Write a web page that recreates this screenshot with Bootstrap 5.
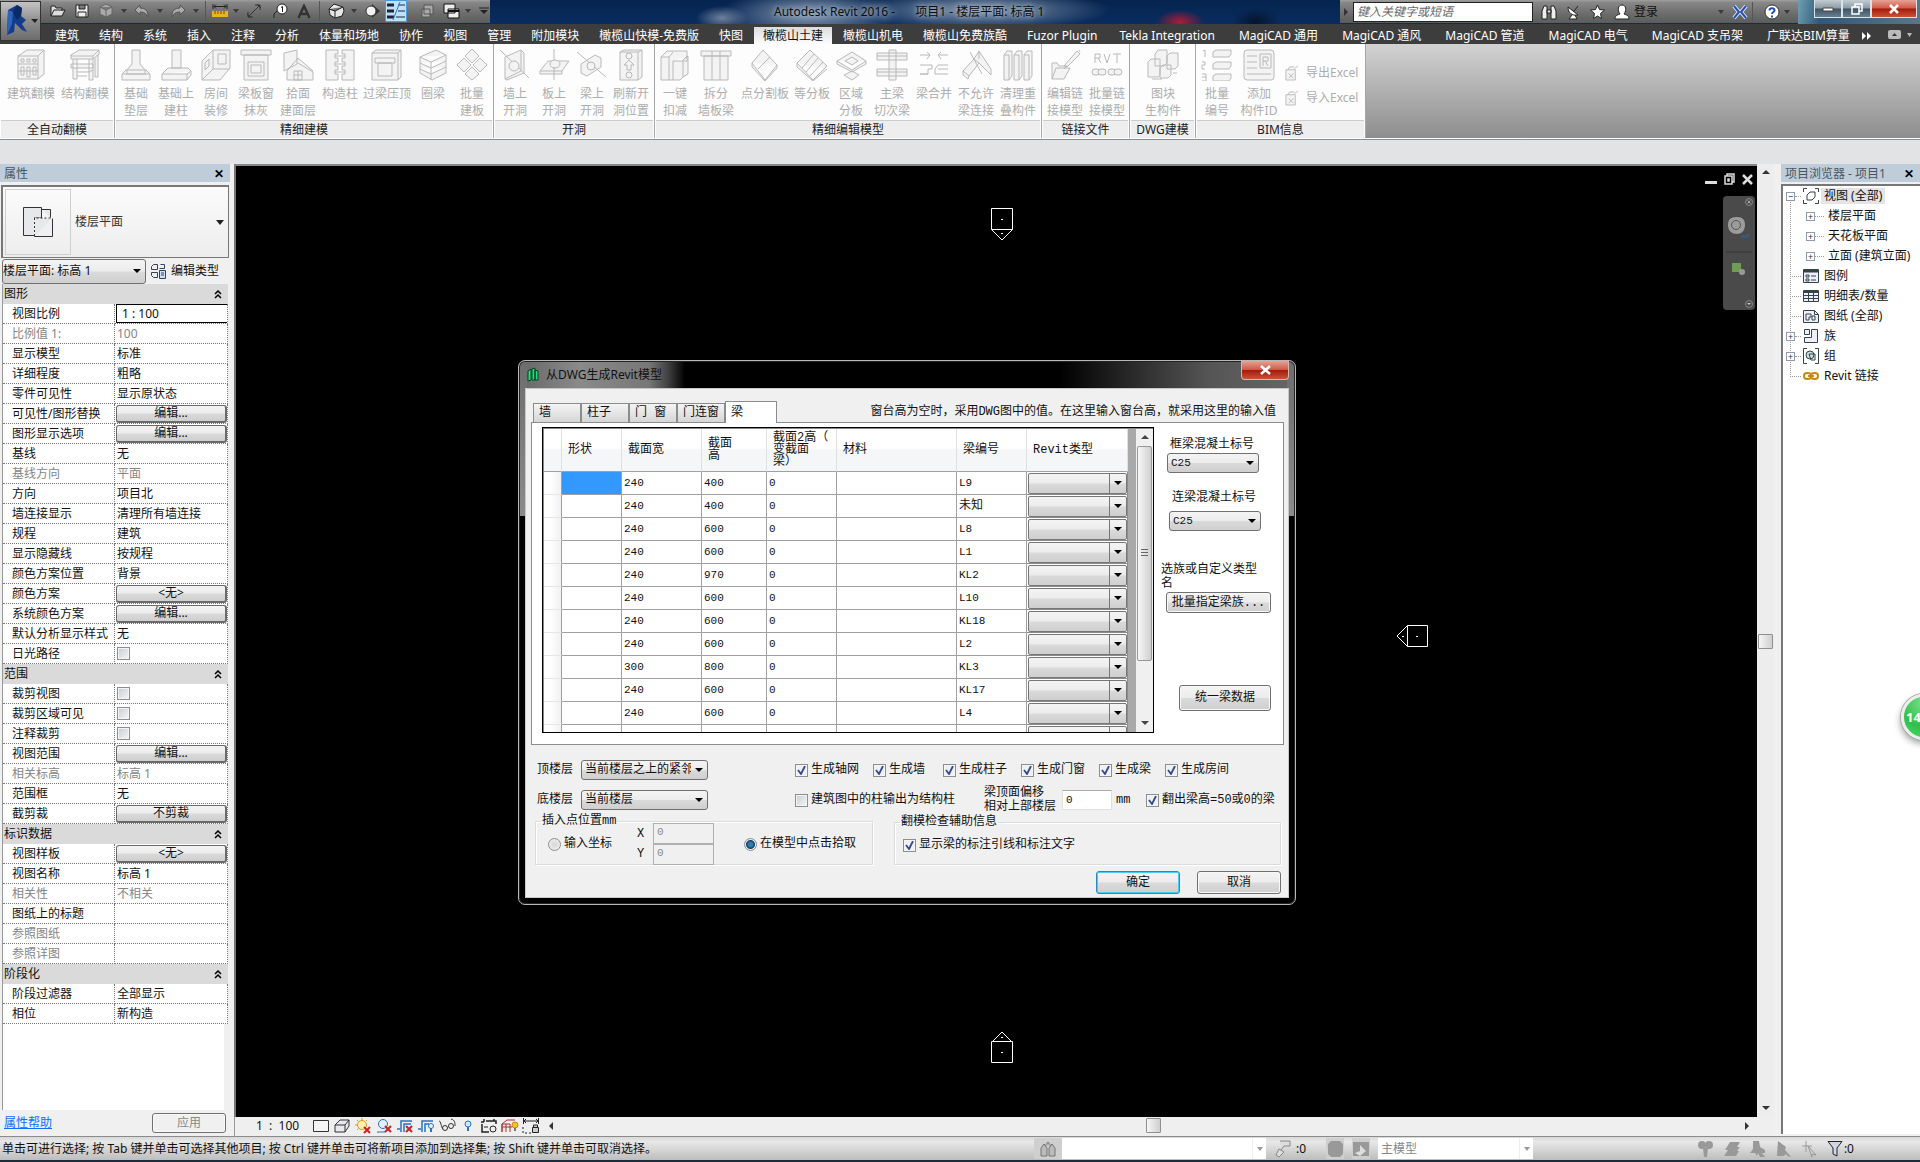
<!DOCTYPE html>
<html lang="zh-CN">
<head>
<meta charset="utf-8">
<meta name="viewport" content="width=device-width, initial-scale=1">
<title>Autodesk Revit 2016 - 项目1 - 楼层平面: 标高 1</title>
<link rel="stylesheet" href="https://cdn.jsdelivr.net/npm/bootstrap@5.3.0/dist/css/bootstrap.min.css">
<style>
:root{--ui:"Noto Sans","Noto Sans CJK SC",sans-serif;--dlg:"Liberation Mono","Noto Sans CJK SC",monospace;
--btn:linear-gradient(#f4f4f4,#ececec 48%,#dadada 52%,#cfcfcf);
--arrow:url("data:image/svg+xml,%3Csvg xmlns='http://www.w3.org/2000/svg' width='16' height='16'%3E%3Cpath d='M4 6h8l-4 4z' fill='%23000'/%3E%3C/svg%3E")}
body{font-family:var(--ui);font-size:12px;line-height:16px;color:#111;background:#f0f0f0}
button,input,select{font:inherit;color:inherit}
button{border:0;background:none;padding:0}
svg{display:block;flex:none}
.app{height:100vh;overflow:hidden}
/* title bar */
.topbar{height:24px;background:radial-gradient(ellipse 26px 12px at 722px 18px,#6f819a,transparent),radial-gradient(ellipse 90px 26px at 810px 14px,#8798b0,transparent),radial-gradient(ellipse 130px 20px at 980px 10px,#8799ae,transparent),radial-gradient(ellipse 24px 12px at 1180px 22px,#b01a36,transparent),radial-gradient(ellipse 24px 14px at 1256px 22px,#04142e,transparent),linear-gradient(#05244f,#0a2c5e)}
.steel{background:linear-gradient(#a0a0a0,#888 10%,#6c6c6c 60%,#5c5c5c);height:23px}
.qat{width:490px;padding-left:45px}
.qat>*{height:22px;display:flex;align-items:center;justify-content:center;flex:none}
.q26{width:26px}.q22{width:22px}.q10{width:10px}
.q10::before,.tri::before{content:"";border:3px solid transparent;border-top:4px solid #3a3a3a;border-bottom:0}
.vsep{width:8px}.vsep::before{content:"";width:1px;height:20px;background:#555}
.qon{background:#bfe0fb;border:1px solid #3d9be9}
.appmenu{position:absolute;left:0;top:1px;width:41px;height:40px;background:linear-gradient(#c4c4c4,#8e8e8e 50%,#6c6c6c);border:1px solid #333;z-index:3}
.caption{flex:1;display:flex;align-items:center;padding-left:284px;gap:20px;color:#0c0c0c;text-shadow:0 0 4px #a9b8cc,0 0 8px #a9b8cc;white-space:pre}
.search{width:180px;height:20px;border:1px solid #222;border-radius:0;padding:0 3px;font-style:italic;background:#fff;flex:none}
.search::placeholder{color:#666}
.infobar{width:458px;flex:none;white-space:nowrap}
.infoicons{gap:9px;padding-left:8px}
.winbtns{width:122px;padding:0 3px 0 16px;background:linear-gradient(100deg,#6fa0b0,#2f587a 20%,#5d7586)}
.winbtns button{height:18px;width:29px;border:1px solid #d8e4ea;border-top:0;display:flex;align-items:center;justify-content:center;background:linear-gradient(#c3ccd2,#8c9aa5 48%,#3f5263 52%,#66808f)}
.winbtns .red{width:47px}
.winbtns .red,.dlgclose{background:linear-gradient(#e6a295,#cf5a47 48%,#a51a0c 52%,#cb5236)!important}
/* tabs */
.ribtabs{height:20px;background:#3d3d3d;padding-left:45px;white-space:nowrap}
.ribtabs .nav-link{padding:3px 10px 0;line-height:17px;color:#fff;border:0;border-radius:0}
.ribtabs .nav-link.wide{padding-left:12px;padding-right:12px}
.ribtabs .nav-link.active{background:linear-gradient(#dcdcdc,#fcfcfc);color:#111;margin:3px 1px 0;padding:0 9px}
/* ribbon */
.ribbon{height:95px;background:linear-gradient(#d2d2d2,#8e8e8e);border-bottom:1px solid #fff;box-shadow:0 1px #8d8d8d;margin-bottom:1px}
.rpanel{background:#fdfdfd;border-right:1px solid #a6a6a6;display:flex;flex-direction:column}
.rtools{flex:1;display:flex;padding:5px 0 0 1px;color:#adadad}
.rpanel:first-child .rtools{padding-left:4px}
.rtools button{display:flex;flex-direction:column;align-items:center;white-space:nowrap;line-height:17px;text-align:center}
.rtools svg{width:32px;height:32px;margin-bottom:4px;fill:#f3f3f3;stroke:#b9b9b9;stroke-width:1}
.rsmall{padding:15px 0 0 4px;gap:8px}
.rtools .sm{flex-direction:row;gap:7px}.rtools .sm svg{width:14px;height:16px;margin:0}
.rtitle{height:18px;background:#eee;border-top:1px solid #ccc;margin:0 1px;text-align:center;line-height:18px;color:#222}
.w36{width:36px}.w38{width:38px}.w40{width:40px}.w44{width:44px}.w54{width:54px}.w64{width:64px}
.optbar{height:24px;background:#e1e3e5}
/* docked panels */
.ptitle{height:18px;background:#bfcddb;color:#4a5560;padding:1px 6px 0 4px;line-height:18px}
.ptitle button{color:#000;font-weight:700;line-height:16px}
.left-dock{width:234px;padding-right:4px;flex:none}
.typebox{height:73px;border:1px solid #777;border-width:2px 1px 1px 2px;background:linear-gradient(#fbfbfb,#ededed);margin:3px 1px 0 1px;color:#333}
.typeimg{width:66px;height:66px;border:1px solid #cfcfcf;margin:0 4px 0 2px}
.instrow{height:26px;padding-left:2px}
.win-select{appearance:none;border:1px solid #707070;border-radius:3px;background:var(--arrow) right 0 center/16px no-repeat,var(--btn);padding:0 16px 0 3px;min-width:0}
.instsel{width:144px;height:25px;padding-left:0}
.props{table-layout:fixed;width:226px;margin-left:2px;border-collapse:separate;border-spacing:0;border-left:1px solid #999}
.props td,.props th{height:20px;padding:0;line-height:18px;white-space:nowrap;overflow:hidden;font-weight:400}
.props .lab{width:112px}
.props .grp th{background:#dadada;padding:0 6px 0 1px}
.props .row-label{padding-left:9px;border-bottom:1px dotted #777;border-right:1px dotted #777;background:#fff}
.props .row-val{padding-left:2px;border-bottom:1px dotted #777;border-right:1px dotted #777;background:#fff}
.props .dim{color:#858585}
.props .hasbtn{padding:0 0 0 1px}
.props .hasbtn button{display:block;width:111px;height:18px;border:1px solid #6a6a6a;border-right-width:2px;border-bottom-width:2px;border-radius:3px;background:var(--btn);line-height:14px}
.props input[type=text]{display:block;width:112px;height:19px;border:1px solid #000;padding:0 5px;background:#fff}
.tick{appearance:none;width:13px;height:13px;border:1px solid #8a8f94;background:linear-gradient(135deg,#c9ccd0,#f6f6f6);box-shadow:inset 0 0 0 1px #f4f4f4;margin:0;flex:none;display:block}
.tick:checked{background:url("data:image/svg+xml,%3Csvg xmlns='http://www.w3.org/2000/svg' viewBox='0 0 11 11'%3E%3Cpath d='M2 5l3 4 4-8' fill='none' stroke='%23324b8c' stroke-width='1.8'/%3E%3C/svg%3E"),#eef0f3}
.propfill{background:#fff;margin:0 6px 0 2px;border-left:1px solid #999}
.propfoot{height:26px}
.applybtn{width:74px;height:20px;color:#888;background:transparent!important}
.win-btn{border:1px solid #707070;border-radius:3px;background:var(--btn);box-shadow:inset 0 0 0 1px #f8f8f8}
/* canvas */
.canvas{background:#000;border-left:2px solid #777;border-top:2px solid #888}
.marker{position:absolute;fill:#000;stroke:#fff}
.navbarv{position:absolute;right:2px;top:30px;width:32px;height:114px;background:#4a4a4a;border-radius:4px}
.mdi{position:absolute;right:4px;top:7px;gap:7px}
.vscroll{width:17px;background:#ededed;flex:none}
.thumb{width:15px;height:15px;background:linear-gradient(90deg,#f6f6f6,#cfcfcf);border:1px solid #8f8f8f;border-radius:1px}
.vthumb{margin-top:453px}.hthumb{margin-left:592px}
.viewbar{height:19px;background:#efefef;border-left:1px solid #999;padding:0 0 2px 21px}
.viewbar svg{width:18px;height:16px;fill:none}
.viewbar .harr{width:6px;height:8px}
.viewscale{width:56px;white-space:pre}
.right-dock{width:146px;padding-left:7px;flex:none}
.tree{background:#fff;border-left:2px solid #777;border-top:2px solid #777;padding:0;margin:2px 0;list-style:none;position:relative}
.tree li{height:20px;display:flex;align-items:center;white-space:nowrap;padding-left:3px}
.tree .exp{width:9px;height:9px;border:1px solid #8e9bb0;background:#fff;position:relative;flex:none;font-size:9px;line-height:7px;color:#234}
.tree .dots{width:6px;border-top:1px dotted #999;flex:none}
.tree .ico{margin:0 5px 0 2px}
.tree .kid{padding-left:23px}.tree .kid .dots{width:9px;margin-right:4px}
.tree .noexp{width:11px;border-top:1px dotted #999;margin-left:4px;flex:none}
.tree .cur{background:#e4e4e4;padding:0 3px;margin-left:-3px}
.tree::before{content:"";position:absolute;left:7px;top:14px;height:177px;border-left:1px dotted #999}
.ball{position:absolute;right:-27px;top:530px;width:46px;height:46px;border-radius:50%;border:3px solid #e9eeea;background:radial-gradient(circle at 50% 15%,#7be08a,#2fbf4a 60%,#4fdc68);box-shadow:0 0 0 1px #aaa,-1px 4px 6px #aaa;color:#fff;font-weight:700;font-size:13px;line-height:40px;text-align:left;padding-left:2px}
.statusbar{height:26px;background:linear-gradient(#d8d8d8,#e8e8e8 20%,#bdbdbd);border-top:1px solid #8b8b8b;border-bottom:2px solid #1d2c3c;white-space:nowrap;padding-left:2px}
.statusbar select{height:21px;border:0;background:#fff;appearance:none;color:#888;padding:0 3px}
.statusright{width:886px}
.wsel{width:190px}.osel{width:141px}
.sbtri{width:14px;background:#fff;height:21px;display:flex;align-items:center;justify-content:center;border-left:1px solid #eee}
.sbtri::before{border-top-color:#999}
.sbi{width:18px;background:#cfcfcf;height:21px;display:flex;align-items:center;justify-content:center}
.sbi.big{width:28px}
.sbend{width:62px}
/* dialog */
.dlg{position:absolute;left:282px;top:194px;width:778px;border:1px solid #b8b8b8;border-radius:7px;background:linear-gradient(#6d6d6d,#8b8b8b 155px,#000 155px) left/8px 100% no-repeat,linear-gradient(#6d6d6d,#8b8b8b 155px,#000 155px) right/8px 100% no-repeat,linear-gradient(90deg,#666,#8a8a8a 60px,#777 130px,#444 148px,#000 166px,#000 540px,#555 690px,#666) top/100% 30px no-repeat,#000;padding:0 6px 6px;box-shadow:inset 0 0 0 1px #222;font-family:var(--dlg)}
.dlghead{height:27px;font-family:var(--ui);color:#111;padding-left:2px}
.dlgtitle{gap:7px}
.dlgclose{width:48px;height:19px;border:1px solid #d6b6b0;border-top:0;border-radius:0 0 4px 4px;align-self:flex-start;display:flex;align-items:center;justify-content:center}
.client{background:#f0f0f0;border:1px solid #c8c8c8;padding:11px 4px 3px 5px}
.dtabs{align-items:flex-end;height:22px;padding-left:2px}
.dtabs .nav-link{width:48px;height:19px;border:1px solid #8c8c8c;border-bottom:0;border-radius:0;background:linear-gradient(#f4f4f4,#d6d6d6);padding:1px 0 0 5px;text-align:left;color:#111;line-height:17px;white-space:nowrap}
.dtabs .nav-link.active{width:52px;height:22px;background:#fff;z-index:1;margin-bottom:-1px;color:#111}
.dnote{padding:4px 8px 0 0}
.tabpage{background:#fff;border:1px solid #8c8c8c;padding:4px 0 11px 10px}
.gridbox{width:612px;height:306px;border:1px solid #000;box-shadow:inset 1px 1px #888;overflow:hidden;background:#a9a9a9;padding:1px 0 0 1px;flex:none}
.beams{table-layout:fixed;width:584px;border-collapse:separate;border-spacing:0;background:#fff;flex:none;align-self:flex-start}
.beams th{height:43px;border-right:1px solid #e0e0e0;border-bottom:1px solid #a0a0a0;background:linear-gradient(#fff,#fff 45%,#f5f6f8 50%,#f5f6f8);padding:0 14px 0 6px;font-weight:400;line-height:12px;vertical-align:middle}
.beams td{height:23px;border-right:1px solid #a0a0a0;border-bottom:1px solid #a0a0a0;padding:0 0 0 2px;line-height:16px;font-size:11px}
.beams td:first-child{background:linear-gradient(90deg,#fff 35%,#f0f1f4);border-bottom-color:#e6e6e6}
.beams td.sel{background:#3399ff}
.beams td.cb{padding:0;border-color:#8c8c8c}
.beams td.cjk{font-size:12px}
.beams select{appearance:none;display:block;width:99px;height:21px;margin-left:1px;border:1px solid #777;border-radius:2px;background:var(--arrow) right 0 center/16px no-repeat,linear-gradient(#777,#777) right 16px center/1px 100% no-repeat,var(--btn)}
.gscroll{width:17px;background:#f0f0f0;padding:0 1px}
.grip{height:215px;background:linear-gradient(90deg,#f7f7f7,#cfcfcf);border:1px solid #979797;border-radius:2px}
.side{flex:1;padding:10px 12px 0 12px;position:relative}
.c25{width:92px;height:20px;align-self:flex-start;margin-left:1px;font-size:11px}
.c25.second{margin:5px 0 0 3px}
.lab2{padding-left:6px;margin-top:17px}
.famtext{line-height:14px;margin:32px 0 1px -5px}
.fambtn{height:21px}
.unibtn{width:92px;height:26px;margin-top:72px}
.foot{padding:15px 3px 0 6px}
.frow{height:20px}.frow2{height:40px}.frow3{height:45px;margin-left:-2px}
.flab{width:44px}.fsel{width:127px;height:20px;margin-right:87px}
.chk{display:flex;align-items:center;gap:3px;white-space:nowrap}
.chk4{width:78px}.chk3{width:66px}.chkpillar{width:189px}.chkxy{width:93px}.chkpick{margin-left:30px}
.offlab{width:78px;line-height:14px}
.mmlab{width:30px}
.num{width:50px;height:20px;border:1px solid #e0e0e0;border-top-color:#aaa;padding:0 3px;background:#fff;font-size:11px;line-height:18px}
.gbx{border:1px solid #dcdcdc;box-shadow:inset 1px 1px #fff,1px 1px #fff;margin:0;padding:0 8px}
.gbx.g1{width:338px;height:51px}.gbx.g2{width:387px;height:50px}
.gbx legend{float:none;width:auto;font-size:12px;line-height:14px;margin:0 0 0 -3px;padding:0 1px}
.gbody{height:36px;margin-top:-2px}
.xylab{width:16px;line-height:20px}
.xy{width:61px;height:21px;border:1px solid #b0b0b0;background:#f0f0f0;color:#8a8a8a;padding:0 3px 3px;font-size:11px;display:block}
.rad{appearance:none;width:13px;height:13px;border:1px solid #8a8f94;border-radius:50%;background:radial-gradient(#d6d6d6,#f4f4f4);margin:0;flex:none}
.rad:checked{background:radial-gradient(#2b7fb0 0 2px,#173f66 4px,#eee 5px)}
.okrow{gap:17px;margin-top:6px}
.okbtn{width:84px;height:23px}
.okbtn.main{border-color:#2c88b8;box-shadow:inset 0 0 0 1px #46cdf5}
</style>
</head>
<body>
<div class="app d-flex flex-column">
<header class="position-relative">
 <button class="appmenu" aria-label="应用程序菜单"><svg width="39" height="38" viewBox="0 0 39 38"><path d="M7 8l9-5 5 3-1 8 5 4-4 4 5 8-5-2-7-7-1 9-7 3z" fill="#153c8c"/><path d="M7 8l5 2-1 12-5 11z" fill="#2f64b8"/><path d="M12 10l4-7 5 3-1 8-4 4z" fill="#0d2a68"/><path d="M30 17h7l-3 4z" fill="#222"/></svg></button>
 <div class="topbar d-flex">
  <div class="steel qat d-flex">
   <button class="q26" aria-label="打开"><svg width="16" height="14" viewBox="0 0 16 14" fill="#ddd" stroke="#222"><path d="M1 12V2h4l1 2h6v3M1 12l3-6h11l-3 6z"/></svg></button>
   <button class="q22" aria-label="保存"><svg width="14" height="14" viewBox="0 0 14 14" fill="#eee" stroke="#222"><path d="M1 1h12v12H1zM4 1v4h6V1M3 13V8h8v5"/></svg></button>
   <button class="q26" aria-label="同步"><svg width="16" height="16" viewBox="0 0 16 16" fill="#aaa" stroke="#666"><path d="M8 1l6 3v7l-6 3-6-3V4zM2 4l6 3 6-3M8 7v7"/></svg></button>
   <button class="q10" aria-label="更多"></button>
   <button class="q26" aria-label="放弃"><svg width="16" height="14" viewBox="0 0 16 14" fill="#aaa" stroke="#555"><path d="M1 6l5-5v3c6 0 8 3 8 9-2-4-4-5-8-5v3z"/></svg></button>
   <button class="q10" aria-label="更多"></button>
   <button class="q26" aria-label="重做"><svg width="16" height="14" viewBox="0 0 16 14" fill="#aaa" stroke="#555"><path d="M15 6l-5-5v3C4 4 2 7 2 13c2-4 4-5 8-5v3z"/></svg></button>
   <button class="q10" aria-label="更多"></button><span class="vsep"></span>
   <button class="q22" aria-label="测量"><svg width="16" height="16" viewBox="0 0 16 16"><path d="M1 1v5M15 1v5M2 3.500h12M4 1.500l-2 2 2 2M12 1.500l2 2-2 2" stroke="#222" fill="none"/><path d="M0 8h16v6H0z" fill="#e8b422"/><path d="M3 8v3M6 8v3M9 8v3M12 8v3" stroke="#6b4b00"/></svg></button>
   <button class="q10" aria-label="更多"></button>
   <button class="q26" aria-label="对齐标注"><svg width="16" height="16" viewBox="0 0 16 16" stroke="#333" fill="none"><path d="M2 14L14 2M9 2h5v5M2 9v5h5M1 11l4 4M11 1l4 4"/></svg></button>
   <button class="q26" aria-label="标记"><svg width="16" height="16" viewBox="0 0 16 16"><circle cx="10" cy="6" r="5" fill="#fff" stroke="#222"/><path d="M9 4.500l1.500-1V9M5 8l-3 3v4" stroke="#222" fill="none"/></svg></button>
   <button class="q22" aria-label="文字"><svg width="14" height="15" viewBox="0 0 14 15" fill="none" stroke="#333" stroke-width="2.500"><path d="M1.500 14L7 2l5.500 12M3.500 10h7"/></svg></button><span class="vsep"></span>
   <button class="q26" aria-label="三维视图"><svg width="17" height="16" viewBox="0 0 17 16" fill="#e6e6e6" stroke="#222"><path d="M1 6l5-5 9 3 1 4-2 5-7 2-5-3zM1 6l6 2 8-4M7 8v7"/></svg></button>
   <button class="q10" aria-label="更多"></button>
   <button class="q26" aria-label="剖面"><svg width="15" height="14" viewBox="0 0 15 14"><path d="M7 0l8 7-8 7z" fill="#333"/><circle cx="6" cy="7" r="5" fill="#f2f2f2" stroke="#333"/></svg></button>
   <button class="q22 qon" aria-label="细线"><svg width="18" height="18" viewBox="0 0 18 18"><path d="M0 3h7M0 9h7M0 15h7" stroke="#223" stroke-width="3"/><path d="M11 3h7M11 9h7M9 15h9" stroke="#223"/><path d="M13 0L6 18" stroke="#2a7bd0"/></svg></button>
   <button class="q26 ms-2" aria-label="关闭隐藏窗口"><svg width="14" height="15" viewBox="0 0 14 15" fill="#aaa" stroke="#555"><path d="M3 1h9v9H3zM1 5h8v8H1z"/></svg></button>
   <button class="q22" aria-label="切换窗口"><svg width="18" height="17" viewBox="0 0 18 17" fill="#eee" stroke="#111"><path d="M1 1h11v9H1zM5 6h11v9H5z"/><path d="M5 8h11" stroke-width="2"/></svg></button>
   <button class="q10" aria-label="更多"></button>
   <button class="q22" aria-label="自定义"><svg width="10" height="8"><path d="M0 1h10" stroke="#222"/><path d="M1 3h8l-4 4z" fill="#222"/></svg></button>
  </div>
  <div class="caption"><span>Autodesk Revit 2016 -</span><span>项目1 - 楼层平面: 标高 1</span></div>
  <div class="steel infobar d-flex align-items-center">
   <svg width="5" height="8" class="ms-1 me-1"><path d="M0 0l4 4-4 4z" fill="#333"/></svg>
   <input class="search" type="search" placeholder="键入关键字或短语" aria-label="搜索">
   <div class="d-flex align-items-center infoicons">
   <button aria-label="搜索"><svg width="16" height="16" viewBox="0 0 16 16" fill="#eee" stroke="#222"><path d="M1 15V7l2-5h3v13zM15 15V7l-2-5h-3v13zM6 6h4v3H6z"/></svg></button>
   <button aria-label="通讯中心"><svg width="15" height="16" viewBox="0 0 15 16" fill="#fff" stroke="#222"><path d="M2 3c0 6 4 9 10 8zM6 11l-3 4h8l-2-4M8 7l4-5"/></svg></button>
   <button aria-label="收藏夹"><svg width="15" height="15" viewBox="0 0 15 15" fill="#fff" stroke="#222"><path d="M7.500 1l2 4.500 5 .5-4 3.500 1 5-4-2.500-4 2.500 1-5-4-3.500 5-.5z"/></svg></button>
   <button class="d-flex gap-1 align-items-center"><svg width="16" height="16" viewBox="0 0 16 16" fill="#fff" stroke="#222"><path d="M1 15c0-4 3-4 5-5-3-4-2-9 2-9s5 5 2 9c2 1 5 1 5 5z"/></svg>登录</button>
   </div>
   <div class="d-flex align-items-center gap-1 ms-auto pe-1">
   <span class="q10 d-flex"></span>
   <button aria-label="Exchange Apps"><svg width="16" height="16" viewBox="0 0 16 16" fill="none"><g stroke="#dde6f5" stroke-width="4"><path d="M2 2l5 6-5 6M14 2L9 8l5 6"/></g><g stroke="#2550b0" stroke-width="2"><path d="M2 2l5 6-5 6M14 2L9 8l5 6"/></g></svg></button>
   <span class="vsep d-flex"></span>
   <button aria-label="帮助"><svg width="16" height="16" viewBox="0 0 16 16"><circle cx="8" cy="8" r="7" fill="#fff" stroke="#333"/><path d="M5.500 6.500c0-3 5-3 5 0 0 1.500-2.500 1.500-2.500 3.500M8 11.500v2" stroke="#2550b0" stroke-width="2" fill="none"/></svg></button>
   <span class="q10 d-flex"></span>
   </div>
  </div>
  <div class="winbtns d-flex">
   <button aria-label="最小化"><svg width="12" height="6"><path d="M1 2h10v3H1z" fill="#fff" stroke="#444"/></svg></button>
   <button aria-label="还原"><svg width="12" height="12" fill="none" stroke="#fff" stroke-width="1.500"><path d="M4 4V1h7v7H8M1 4h7v7H1z"/></svg></button>
   <button class="red" aria-label="关闭"><svg width="12" height="10" stroke="#fff" stroke-width="2.500"><path d="M2 1l8 8M10 1L2 9"/></svg></button>
  </div>
 </div>
 <nav class="ribtabs nav nav-tabs flex-nowrap border-0 align-items-start" id="tabs"></nav>
 <div class="ribbon d-flex" id="ribbon"></div>
 <div class="optbar"></div>
</header>

<main class="d-flex flex-fill" style="min-height:0">
 <aside class="left-dock d-flex flex-column">
  <div class="ptitle d-flex justify-content-between"><span>属性</span><button aria-label="关闭属性">✕</button></div>
  <div class="typebox d-flex align-items-center">
   <div class="typeimg d-flex align-items-center justify-content-center"><svg width="32" height="32" viewBox="0 0 32 32" fill="#e6e8ea" stroke="#333"><path d="M20 3.500h8.500v9"/><path d="M1.500 1.500h18v10h-7v18h-11z"/><path d="M12.500 12.500h18v18h-18z" fill="#f0f0f4"/><path d="M12.500 30v-18h18" stroke="#fff"/><path d="M12.500 30v-18h18M19.500 3v9" stroke-dasharray="2 2"/></svg></div>
   <span>楼层平面</span><svg class="ms-auto me-1" width="8" height="5"><path d="M0 0h8l-4 5z" fill="#222"/></svg>
  </div>
  <div class="instrow d-flex align-items-center">
   <select class="win-select instsel" id="inst" aria-label="实例"><option>楼层平面: 标高 1</option></select>
   <button class="d-flex align-items-center gap-1 ms-1"><svg width="17" height="17" viewBox="0 0 17 17" fill="none" stroke="#345"><path d="M3.500 1.500h4v5h-6v-3zM10.500 1.500h4v4h-5M1.500 9.500h6v5h-4l-2-2z"/><path d="M9.500 7.500h6v8h-6z" fill="#cfe2f7"/><path d="M11 10h3M11 12h3"/></svg>编辑类型</button>
  </div>
  <table class="props"><colgroup><col class="lab"><col></colgroup><tbody id="props"></tbody></table>
  <div class="propfill flex-fill"></div>
  <div class="propfoot d-flex align-items-center justify-content-between ps-1 pe-1"><a href="#help">属性帮助</a><button class="win-btn applybtn" disabled>应用</button></div>
 </aside>

 <section class="d-flex flex-column flex-fill" style="min-width:0">
  <div class="d-flex flex-fill">
   <div class="canvas flex-fill position-relative overflow-hidden">
    <svg class="marker" style="left:754px;top:42px" width="24" height="33"><path d="M1.500 21.500l10.500 10.500L22.500 21.500M1.500.5h21v21h-21zM11 11.500h2M11 25.500h2"/></svg>
    <svg class="marker" style="left:1160px;top:458px" width="34" height="24"><path d="M11.500 1.500L1 12l10.500 10.500M11.500 1.500h20v21h-20zM20 12.500h2M6 12.500h2"/></svg>
    <svg class="marker" style="left:754px;top:865px" width="24" height="33"><path d="M1.500 11.500L12 1l10.500 10.500M1.500 10.500h21v21h-21zM11 21.500h2M11 6.500h2"/></svg>
    <div class="mdi d-flex"><svg width="12" height="12"><path d="M0 8h12v3H0z" fill="#ddd"/></svg><svg width="11" height="12" fill="none" stroke="#ddd" stroke-width="1.500"><path d="M3 3V1h7v8H8M1 3h7v8H1zM4 6h1v2H4z"/></svg><svg width="11" height="12" stroke="#ddd" stroke-width="2.500"><path d="M1 2l9 9M10 2l-9 9"/></svg></div>
    <div class="navbarv"><svg width="32" height="114" viewBox="0 0 32 114" fill="none"><circle cx="26" cy="6" r="3.500" stroke="#888"/><path d="M24.500 4.500l3 3M27.500 4.500l-3 3" stroke="#aaa"/><path d="M14 21c6 0 8 3 8 8s-3 9-8 9-9-3-9-9 3-8 9-8z" fill="#9b9b9b"/><circle cx="13" cy="29" r="4.500" stroke="#555"/><path d="M18 40c4 2 7 1 8-2" stroke="#39587c" stroke-width="3"/><path d="M3 56h26" stroke="#333"/><path d="M9 67h9v9H9z" fill="#6f9d55"/><circle cx="19" cy="76" r="3" fill="#999"/><circle cx="26" cy="108" r="3.500" stroke="#888"/><path d="M24 107h4l-2 2z" fill="#ccc"/></svg></div>

    <div class="dlg" role="dialog" aria-labelledby="dt">
     <div class="dlghead d-flex align-items-center justify-content-between"><span class="d-flex dlgtitle align-items-center"><svg width="12" height="15" viewBox="0 0 12 15" fill="#2fd67a" stroke="#042"><path d="M1 4l3-2v11l-3 1zM5 2l3-1v12H5zM8 3l3 1v9H8z"/></svg><span id="dt">从DWG生成Revit模型</span></span><button class="dlgclose" aria-label="关闭"><svg width="11" height="10" stroke="#fff" stroke-width="2.500"><path d="M1 1l9 8M10 1L1 9"/></svg></button></div>
     <div class="client">
      <div class="d-flex justify-content-between">
       <div class="dtabs nav flex-nowrap"><button class="nav-link">墙</button><button class="nav-link">柱子</button><button class="nav-link">门 窗</button><button class="nav-link">门连窗</button><button class="nav-link active">梁</button></div>
       <span class="text-nowrap dnote">窗台高为空时，采用DWG图中的值。在这里输入窗台高，就采用这里的输入值</span>
      </div>
      <div class="tabpage d-flex">
       <div class="gridbox d-flex">
        <table class="beams"><colgroup><col style="width:18px"><col style="width:60px"><col style="width:80px"><col style="width:65px"><col style="width:70px"><col style="width:120px"><col style="width:70px"><col style="width:101px"></colgroup>
        <thead><tr><th></th><th>形状</th><th>截面宽</th><th>截面<br>高</th><th class="pe-0 text-nowrap">截面2高（<br>变截面<br>梁）</th><th>材料</th><th>梁编号</th><th class="text-nowrap">Revit类型</th></tr></thead><tbody id="beams"></tbody></table>
        <div class="gscroll ms-auto d-flex flex-column align-items-stretch"><svg width="15" height="17"><path d="M4 10l4-4 4 4z" fill="#444"/></svg><div class="grip d-flex align-items-center justify-content-center"><svg width="8" height="9" stroke="#666"><path d="M0 .5h7M0 3.500h7M0 6.500h7"/></svg></div><svg class="mt-auto" width="15" height="17"><path d="M4 6l4 4 4-4z" fill="#444"/></svg></div>
       </div>
       <div class="side d-flex flex-column">
        <label for="c1" class="ps-1">框梁混凝土标号</label>
        <select class="win-select c25" id="c1"><option>C25</option></select>
        <label for="c2" class="lab2">连梁混凝土标号</label>
        <select class="win-select c25 second" id="c2"><option>C25</option></select>
        <div class="famtext">选族或自定义类型<br>名</div>
        <button class="win-btn text-nowrap fambtn">批量指定梁族...</button>
        <button class="win-btn align-self-end unibtn">统一梁数据</button>
       </div>
      </div>
      <div class="foot">
       <div class="d-flex align-items-center frow">
        <label for="topf" class="flab">顶楼层</label><select class="win-select fsel" id="topf"><option>当前楼层之上的紧邻楼层</option></select>
        <label class="chk chk4"><input class="tick" type="checkbox" checked>生成轴网</label><label class="chk chk3 me-1"><input class="tick" type="checkbox" checked>生成墙</label><label class="chk chk4"><input class="tick" type="checkbox" checked>生成柱子</label><label class="chk chk4"><input class="tick" type="checkbox" checked>生成门窗</label><label class="chk chk3"><input class="tick" type="checkbox" checked>生成梁</label><label class="chk chk4"><input class="tick" type="checkbox" checked>生成房间</label>
       </div>
       <div class="d-flex align-items-center frow2">
        <label for="botf" class="flab">底楼层</label><select class="win-select fsel" id="botf"><option>当前楼层</option></select>
        <label class="chk chkpillar"><input class="tick" type="checkbox">建筑图中的柱输出为结构柱</label>
        <label for="off" class="text-nowrap offlab">梁顶面偏移<br>相对上部楼层</label><input class="num" id="off" type="text" value="0"><span class="ms-1 mmlab">mm</span>
        <label class="chk"><input class="tick" type="checkbox" checked>翻出梁高=50或0的梁</label>
       </div>
       <div class="d-flex justify-content-between align-items-end frow3">
        <fieldset class="gbx g1"><legend>插入点位置mm</legend>
         <div class="gbody d-flex align-items-center"><label class="chk ps-1 chkxy"><input class="rad" type="radio" name="ins">输入坐标</label>
         <div class="d-flex flex-column xylab"><label for="x">X</label><label for="y">Y</label></div>
         <div><input class="xy" id="x" value="0" disabled><input class="xy" id="y" value="0" disabled></div>
         <label class="chk chkpick"><input class="rad" type="radio" name="ins" checked>在模型中点击拾取</label></div></fieldset>
        <fieldset class="gbx g2"><legend>翻模检查辅助信息</legend><div class="gbody d-flex align-items-center"><label class="chk"><input class="tick" type="checkbox" checked>显示梁的标注引线和标注文字</label></div></fieldset>
       </div>
       <div class="d-flex justify-content-end okrow"><button class="win-btn okbtn main">确定</button><button class="win-btn okbtn">取消</button></div>
      </div>
     </div>
    </div>
   </div>
   <div class="vscroll d-flex flex-column align-items-center"><svg width="16" height="17"><path d="M4 10l4-4 4 4z" fill="#333"/></svg><div class="thumb vthumb"></div><svg class="mt-auto" width="16" height="17"><path d="M4 6l4 4 4-4z" fill="#333"/></svg></div>
  </div>
  <div class="viewbar d-flex align-items-center">
   <span class="viewscale">1  :  100</span>
   <span class="d-flex" style="gap:3px">
    <svg viewBox="0 0 18 16" stroke="#333"><path d="M1.500 2.500h15v11h-15z" fill="#f4f4f4"/></svg>
    <svg viewBox="0 0 18 16" stroke="#333"><path d="M2 7l5-5h9v6l-4 6H2zM2 7h10v7M12 7l4-5" fill="#e8e8ee"/></svg>
    <svg viewBox="0 0 18 16"><circle cx="8" cy="7" r="4.500" fill="#fff2b0" stroke="#d79a12"/><path d="M8 0v2M1 7h2M3 2l1.500 1.500M3 12l1.500-1.500M13 2l-1 1" stroke="#d79a12"/><path d="M10 9l6 6M16 9l-6 6" stroke="#c22" stroke-width="2"/></svg>
    <svg viewBox="0 0 18 16"><circle cx="8" cy="6" r="4.500" stroke="#2a72b8" fill="#e3f0fb"/><path d="M2 14h8" stroke="#2a72b8"/><path d="M10 8l6 6M16 8l-6 6" stroke="#c22" stroke-width="2"/></svg>
    <svg viewBox="0 0 18 16"><path d="M1 11h3M5 14V3h11M8 14V6h7" stroke="#2a72b8" stroke-width="1.500"/><path d="M10 8l6 6M16 8l-6 6" stroke="#c22" stroke-width="2"/></svg>
    <svg viewBox="0 0 18 16"><path d="M1 11h3M5 14V3h11M8 14V6h4" stroke="#2a72b8" stroke-width="1.500"/><circle cx="14" cy="8" r="2.500" stroke="#2a72b8"/><path d="M14 10v4" stroke="#2a72b8" stroke-width="2"/></svg>
    <svg viewBox="0 0 18 16" stroke="#333"><path d="M1 3c2 0 2 6 4 8M13 1c4 1 4 4 4 7"/><circle cx="7" cy="10" r="2.500"/><circle cx="13" cy="8" r="2.500"/></svg>
    <svg viewBox="0 0 18 16" stroke="#2a72b8"><circle cx="9" cy="6" r="3" fill="#cfe6fa"/><path d="M9 9v4" stroke-width="2"/></svg>
    <svg viewBox="0 0 18 16" stroke="#222"><path d="M4 1v3M1 4h3M6 3h10v3M2 6v8h7M14 1v2" stroke-width="1.500"/><circle cx="13" cy="11" r="3"/><path d="M4 9h4"/></svg>
    <svg viewBox="0 0 18 16"><path d="M1 14V6l5-4h8M1 9h10M1 14V6h8v8M5 6v8" stroke="#a33"/><circle cx="14" cy="7" r="3" fill="#fbc22d" stroke="#c80"/><path d="M14 10v3" stroke="#777" stroke-width="2"/></svg>
    <svg viewBox="0 0 18 16" stroke="#222"><path d="M1.500 0v6M16.500 0v6M2 3h14M4 1L2 3l2 2M14 1l2 2-2 2"/><path d="M10.500 9.500h6v5h-6zM11.500 9V7h4v2" fill="#ccc"/><path d="M1 9v6h8" stroke-dasharray="2"/></svg>
   </span>
   <svg class="harr ms-2"><path d="M5 0v8L1 4z" fill="#333"/></svg>
   <div class="thumb hthumb"></div>
   <svg class="harr ms-auto me-4"><path d="M1 0v8l4-4z" fill="#333"/></svg>
  </div>
 </section>

 <aside class="right-dock d-flex flex-column position-relative">
  <div class="ptitle d-flex justify-content-between"><span>项目浏览器 - 项目1</span><button aria-label="关闭浏览器">✕</button></div>
  <ul class="tree flex-fill" id="tree"></ul>
  <button class="ball">14</button>
 </aside>
</main>

<footer class="statusbar d-flex align-items-center">
 <span class="flex-fill">单击可进行选择; 按 Tab 键并单击可选择其他项目; 按 Ctrl 键并单击可将新项目添加到选择集; 按 Shift 键并单击可取消选择。</span>
 <span class="d-flex align-items-center statusright">
  <span class="sbi big"><svg width="16" height="16" viewBox="0 0 16 16" fill="#bbb" stroke="#777"><path d="M1 15V7l3-4 3 4v8zM9 15V7l3-4 3 4v8zM5 5l3-4 3 4"/></svg></span>
  <select class="wsel" aria-label="工作集"><option></option></select><span class="sbtri tri me-2"></span>
  <svg width="18" height="18" viewBox="0 0 16 18" fill="#ddd" stroke="#888"><path d="M5 1h10v5H9l-3 4M4 9l5 3-5 5-3-2z"/></svg><span class="ms-1 me-3">:0</span>
  <span class="sbi ms-1 me-2"><svg width="15" height="16"><path d="M0 3l3-3h9l3 3v10l-3 3H3l-3-3z" fill="#999"/></svg></span><span class="sbi me-2"><svg width="16" height="16"><path d="M0 1h16v14H0z" fill="#999"/><path d="M2 8h5M2 12l5-2V4l6 6-6 5" fill="#ddd"/></svg></span>
  <select class="osel" aria-label="设计选项"><option>主模型</option></select><span class="sbtri tri"></span>
  <span class="d-flex ms-auto pe-1 align-items-center" style="gap:9px">
   <svg width="17" height="18" fill="#999"><circle cx="5" cy="5" r="4"/><circle cx="12" cy="5" r="4"/><path d="M6 8h5l-1 9H7z"/></svg>
   <svg width="17" height="18" fill="#999"><path d="M7 2h10l-3 5h3l-3 4h2l-3 5H1l4-6H2z"/></svg>
   <svg width="17" height="18" fill="#999"><path d="M4 1h6l1 6 5 3v3h-3l3 4h-5l-2-4-1 3-2-3H1l3-4z"/></svg>
   <svg width="17" height="18" fill="#999"><path d="M3 1l8 6-1 3 6 7-4-1v-2l-4 2H2z"/></svg>
   <svg width="17" height="18" fill="none" stroke="#999"><path d="M5 1v11M1 6h10M7 6l8 9-4-1v3z"/></svg>
   <span class="d-flex align-items-end"><svg width="17" height="17" fill="#cfd6df" stroke="#223"><path d="M1 1.500h14L10 8v8l-4-2V8z"/></svg>:0</span>
  </span>
  <span class="sbend"></span>
 </span>
</footer>
</div>
<script src="https://cdn.jsdelivr.net/npm/bootstrap@5.3.0/dist/js/bootstrap.bundle.min.js"></script>
<script>
const el=id=>document.getElementById(id);
const tabs=['建筑','结构','系统','插入','注释','分析','体量和场地','协作','视图','管理','附加模块','橄榄山快模-免费版','快图','橄榄山土建','橄榄山机电','橄榄山免费族酷','Fuzor Plugin','Tekla Integration','MagiCAD 通用','MagiCAD 通风','MagiCAD 管道','MagiCAD 电气','MagiCAD 支吊架','广联达BIM算量'];
el('tabs').innerHTML=tabs.map(t=>`<a href="#" class="nav-link${t==='橄榄山土建'?' active':/CAD|Tekla|BIM/.test(t)?' wide':''}">${t}</a>`).join('')+
 '<svg class="mt-2" width="10" height="8" fill="#fff"><path d="M0 0l4 4-4 4zM5 0l4 4-4 4z"/></svg><svg class="ms-3 mt-1" width="26" height="12"><rect y="2" width="13" height="9" rx="2" fill="#bbb"/><path d="M4 8h5L6.500 5z" fill="#333"/><path d="M19 5h5l-2.500 4z" fill="#bbb"/></svg>';

// line drawings on a 32 x 32 grid
const ic={
bld:'<path d="M3 7l9-6h17v24l-6 5H3zM3 7h20v23M23 7l6-6M3 15h20M3 22h20M6 10h3v3H6zM12 10h3v3h-3zM18 10h3v3h-3zM6 18h3v8H6zM12 18h3v10h-3zM18 18h3v8h-3z"/>',
str:'<path d="M2 6l8-5h20l-6 6H2zM2 6v4h22V7M24 10l6-5V1M4 10v20h4V10M20 10v21h4V10M26 9v19h3V6M2 15h22v4H2zM8 23h12l4-2M8 27h10"/>',
fnd:'<path d="M12 1h8v14l5 6v4H7v-4l5-6zM2 25l4-4h20l4 4v6H2zM2 25h28"/>',
col:'<path d="M12 1h9v18h-9zM2 25l6-6h20l3 3v4l-4 5H2zM2 25h25l4-3M27 25v6"/>',
room:'<path d="M2 31V12L13 1h17v18L20 31zM13 1v19L2 31M13 20h17M18 5h8v10h-8zM5 14l4-4v7l-4 4z"/>',
win:'<path d="M1 1h30v5H1zM4 6h24v25H4zM8 13h16v14H8zM11 16h10v8H11z"/>',
house:'<path d="M2 4l13-3v14L2 22zM16 14L31 23v8H5v-9l11-13 15 13M12 22h8v9h-8zM16 22v9M12 26h8"/>',
post:'<path d="M2 1h12v4h-3v4h3v4h-3v4h3v4h-3v4h3v6H2zM18 1h12v30H18v-6h3v-4h-3v-4h3v-4h-3V9h3V5h-3zM11 7h10M11 15h10M11 23h10"/>',
lint:'<path d="M1 4l4-3h25v27l-3 3H1zM1 4h26v27M27 4l3-3M4 9h20v5H4zM7 14h14v13H7z"/>',
ring:'<path d="M3 8l16-7 10 5v18L15 31 3 24zM3 8l11 5 15-7M14 13v18M3 14l11 5 15-7M3 20l11 5 15-7"/>',
tiles:'<path d="M16 0l7 7-7 7-7-7zM8 9l7 7-7 7-7-7zM24 9l7 7-7 7-7-7zM16 18l7 7-7 6-7-6z"/>',
hole1:'<path d="M6 8l16-7v21L6 30zM22 1l3 3v20l-17 7-2-1M1 1l29 28"/><circle cx="15" cy="17" r="5"/>',
hole2:'<path d="M2 22l8-10h21l-7 10v3H2zM2 22h22M16 0v31"/><ellipse cx="17" cy="15" rx="5" ry="4"/>',
hole3:'<path d="M5 15l14-9 6 3v9l-14 9-6-3zM1 3l29 25"/><circle cx="15" cy="17" r="4"/>',
fresh:'<path d="M5 3l4-2h18v27l-4 3H5zM23 3v28M5 3h18l4-2M14 11l5 5h-3v5h-4v-5H9z"/><circle cx="14" cy="7" r="3"/><circle cx="14" cy="26" r="3"/>',
cut:'<path d="M2 8l6-6h20v5l-4 4v17l-3 3H2zM2 8h8l4-5M10 8v23M14 12h14v-5M14 12v19M24 11l5-4v18l-5 3"/>',
split:'<path d="M1 2h30v5H1zM4 7h24v24H4zM12 2v29M20 2v29"/>',
pt:'<path d="M3 14L14 1l14 15-12 15zM3 14v4l13 14 12-13v-3M9 20L21 8"/>',
eq:'<path d="M1 14L14 1l17 16-14 14zM1 14v4l16 14 14-12M6 19L18 5M10 23L22 9M14 27L27 13"/>',
zone:'<path d="M2 12l15-9 14 9-14 9zM2 12v3l15 8 14-8v-3M10 12l7-4 6 4-6 4zM9 26l8-4 7 4-7 5z"/>',
beam:'<path d="M1 4h30v7H1zM1 20h30v7H1zM13 1h7v30h-7zM1 7h30M1 23h30"/>',
merge:'<path d="M2 6h10M9 3l3 3-3 4M30 6H20M23 3l-3 3 3 4M2 16h12v4h-4v5H2M2 25h8M30 16H20l-3 4v5h13M30 20H20" fill="none"/>',
nolink:'<path d="M3 22L14 10l5 4L9 27zM14 10l5-8 12 18v6L19 14M19 2v8M3 22v4l5 4 1-3M10 3l12 22" />',
clean:'<path d="M2 6l3-4h5v25l-3 4H2zM12 6l3-4h5v25l-3 4h-5zM22 6l3-4h5v25l-3 4h-5zM2 6h5v25M12 6h5v25M22 6h5v25"/>',
edit:'<path d="M3 30V14h5l2 3h8l-3 3M3 30l4-11h14l-6 11zM15 17L28 2l3 3-13 13zM30 1l1 2"/>',
rvt:'<path d="M4 14V5h5v4H4M7 9l3 5M13 5l3 9 3-9M22 5h8M26 5v9" fill="none"/><rect x="1" y="20" width="8" height="6" rx="3"/><rect x="7" y="20" width="8" height="6" rx="3"/><rect x="17" y="20" width="8" height="6" rx="3"/><rect x="23" y="20" width="8" height="6" rx="3"/>',
block:'<path d="M8 5l3-4h9v13l-3 3H8zM20 7l3-3h8v13l-3 3h-8zM1 13l3-3h9v16l-2 2H1zM13 19l3-3h8v10l-3 3h-8zM5 30h10M26 24h4"/>',
num:'<path d="M2 2l2-1v7M1 13h3v3H1v4h3M1 25h4v7H1M1 28h4" fill="none"/><path d="M12 3l3-2h15v4l-2 3H12zM12 15l3-2h15v4l-2 3H12zM12 27l3-2h15v4l-2 3H12z"/>',
id:'<rect x="1" y="1" width="30" height="30" rx="3"/><path d="M4 7h10M4 13h10M4 19h10M4 25h24M17 5h11v14H17zM20 17V8h5v4h-5M22 12l3 5" />',
xo:'<path d="M1 5h10v11H1zM3 5l2-3h5M4 9l5 5M9 9l-5 5M10 4l4-3"/>'
};
const panels=[['全自动翻模',115,[['bld',54,'建筑翻模'],['str',54,'结构翻模']]],
['精细建模',379,[['fnd',40,'基础<br>垫层'],['col',40,'基础上<br>建柱'],['room',40,'房间<br>装修'],['win',40,'梁板窗<br>抹灰'],['house',44,'拾面<br>建面层'],['post',40,'构造柱'],['lint',54,'过梁压顶'],['ring',38,'圈梁'],['tiles',40,'批量<br>建板']]],
['开洞',161,[['hole1',40,'墙上<br>开洞'],['hole2',38,'板上<br>开洞'],['hole3',38,'梁上<br>开洞'],['fresh',40,'刷新开<br>洞位置']]],
['精细编辑模型',387,[['cut',38,'一键<br>扣减'],['split',44,'拆分<br>墙板梁'],['pt',54,'点分割板'],['eq',40,'等分板'],['zone',38,'区域<br>分板'],['beam',44,'主梁<br>切次梁'],['merge',40,'梁合并'],['nolink',44,'不允许<br>梁连接'],['clean',40,'清理重<br>叠构件']]],
['链接文件',88,[['edit',44,'编辑链<br>接模型'],['rvt',40,'批量链<br>接模型']]],
['DWG建模',66,[['block',64,'图块<br>生构件']]],
['BIM信息',170,[['num',40,'批量<br>编号'],['id',44,'添加<br>构件ID']]]];
el('ribbon').innerHTML=panels.map(([t,w,b])=>`<div class="rpanel" style="width:${w}px"><div class="rtools">${b.map(([i,k,l])=>`<button class="w${k}"><svg viewBox="0 0 32 32">${ic[i]}</svg><span>${l}</span></button>`).join('')}${t==='BIM信息'?`<div class="d-flex flex-column rsmall">${['导出Excel','导入Excel'].map(l=>`<button class="sm"><svg viewBox="0 0 15 17">${ic.xo}</svg>${l}</button>`).join('')}</div>`:''}</div><div class="rtitle">${t}</div></div>`).join('');

// g: group, b: button, c: tick box, i: text box, d: greyed, t: plain
const props=[['g','图形'],['i','视图比例','1 : 100'],['d','比例值 1:','100'],['t','显示模型','标准'],['t','详细程度','粗略'],['t','零件可见性','显示原状态'],['b','可见性/图形替换','编辑...'],['b','图形显示选项','编辑...'],['t','基线','无'],['d','基线方向','平面'],['t','方向','项目北'],['t','墙连接显示','清理所有墙连接'],['t','规程','建筑'],['t','显示隐藏线','按规程'],['t','颜色方案位置','背景'],['b','颜色方案','&lt;无&gt;'],['b','系统颜色方案','编辑...'],['t','默认分析显示样式','无'],['c','日光路径'],['g','范围'],['c','裁剪视图'],['c','裁剪区域可见'],['c','注释裁剪'],['b','视图范围','编辑...'],['d','相关标高','标高 1'],['t','范围框','无'],['b','截剪裁','不剪裁'],['g','标识数据'],['b','视图样板','&lt;无&gt;'],['t','视图名称','标高 1'],['d','相关性','不相关'],['t','图纸上的标题',''],['d','参照图纸',''],['d','参照详图',''],['g','阶段化'],['t','阶段过滤器','全部显示'],['t','相位','新构造']];
const chev='<svg width="8" height="9" fill="none" stroke="#000" stroke-width="1.500"><path d="M1 4l3-3 3 3M1 8l3-3 3 3"/></svg>';
el('props').innerHTML=props.map(([k,l,v],n)=>{
 if(k==='g')return `<tr class="grp"><th colspan="2"><div class="d-flex justify-content-between align-items-center">${l}${chev}</div></th></tr>`;
 const c=k==='b'?`<button>${v}</button>`:k==='c'?`<input class="tick" type="checkbox" id="p${n}">`:k==='i'?`<input type="text" id="p${n}" value="${v}">`:v;
 return `<tr class="${k==='d'?'dim':''}"><td class="row-label"><label for="p${n}">${l}</label></td><td class="row-val ${k==='b'||k==='i'?'hasbtn':''}">${c}</td></tr>`;}).join('');

const beams=[[240,400,'L9'],[240,400,'未知'],[240,600,'L8'],[240,600,'L1'],[240,970,'KL2'],[240,600,'L10'],[240,600,'KL18'],[240,600,'L2'],[300,800,'KL3'],[240,600,'KL17'],[240,600,'L4'],['','','']];
el('beams').innerHTML=beams.map(([w,h,n],i)=>`<tr><td></td><td class="${i?'':'sel'}"></td><td>${w}</td><td>${h}</td><td>${n?0:''}</td><td></td><td class="${n==='未知'?'cjk':''}">${n}</td><td class="cb"><select aria-label="Revit类型 ${i+1}"><option></option></select></td></tr>`).join('');

const S=p=>`<svg class="ico" width="16" height="16" viewBox="0 0 16 16" fill="none" stroke="#344">${p}</svg>`;
const tree=[['-','视图 (全部)',S('<path d="M4 .5H.5V4M12 .5h3.500V4M4 15.500H.5V12M12 15.500h3.500V12M4 7l3-3h5v5l-3 3H4z"/>')],['k','楼层平面'],['k','天花板平面'],['k','立面 (建筑立面)'],
['','图例',S('<path d="M.5 1.500h15v13H.5z" fill="#eef"/><path d="M1 3h14" stroke-width="3"/><path d="M3 7h3v2H3zM3 11h3v2H3zM8 8h5M8 12h5"/>')],
['','明细表/数量',S('<path d="M.5 2.500h15v11H.5z" fill="#eef"/><path d="M1 4h14" stroke-width="2"/><path d="M1 7.500h14M1 10.500h14M5.500 3v10M10.500 3v10"/>')],
['','图纸 (全部)',S('<path d="M.5 2.500h11l4 4v8H.5z" fill="#eef"/><path d="M11.500 2.500v4h4M3 6h5v3H6v3H3zM9 8h3v4H9z"/>')],
['+','族',S('<path d="M1.500 1.500h5v5h-5zM8.500 1.500h6v13h-13v-5h7z" fill="#eef"/>')],
['+','组',S('<path d="M4 .5H.5v15H4M12 .5h3.500v15H12"/><circle cx="7" cy="7" r="4" fill="#cdd"/><path d="M6 6h6v6H8z"/>')],
['','Revit 链接',S('<g stroke="#c88a10" stroke-width="2"><rect x="1" y="5" width="7" height="6" rx="3"/><rect x="8" y="5" width="7" height="6" rx="3"/><path d="M5 8h6"/></g>')]];
el('tree').innerHTML=tree.map(([k,t,i])=>k==='k'?`<li class="kid"><button class="exp" aria-label="展开">+</button><span class="dots"></span>${t}</li>`:`<li>${k?`<button class="exp" aria-label="展开">${k==='+'?'+':'−'}</button><span class="dots"></span>`:'<span class="noexp"></span>'}${i}${k==='-'?`<span class="cur">${t}</span>`:t}</li>`).join('');
</script>
</body>
</html>
